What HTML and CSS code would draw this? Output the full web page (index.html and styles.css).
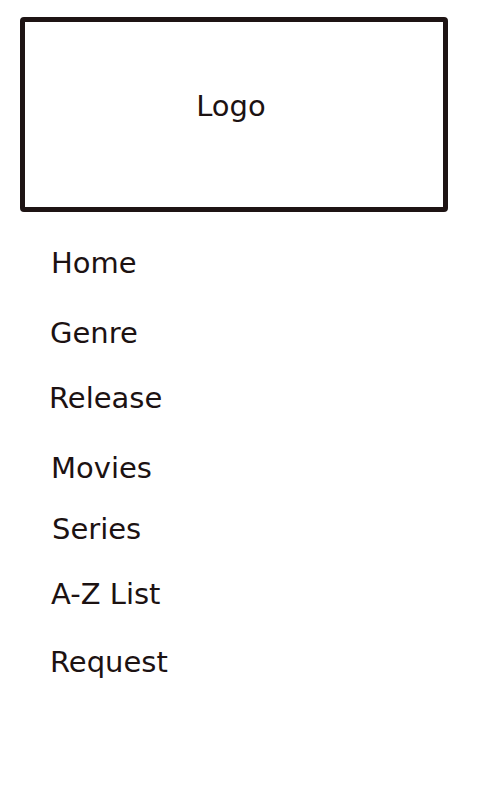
FILE: index.html
```html
<!DOCTYPE html>
<html lang="en">
<head>
<meta charset="utf-8">
<title>Menu</title>
<link rel="stylesheet" href="styles.css">
</head>
<body>
<div class="page">
  <div class="logo-box"><span class="logo-text">Logo</span></div>
  <nav class="menu">
    <a class="menu-item item-home" href="#">Home</a>
    <a class="menu-item item-genre" href="#">Genre</a>
    <a class="menu-item item-release" href="#">Release</a>
    <a class="menu-item item-movies" href="#">Movies</a>
    <a class="menu-item item-series" href="#">Series</a>
    <a class="menu-item item-az" href="#">A-Z List</a>
    <a class="menu-item item-request" href="#">Request</a>
  </nav>
</div>
</body>
</html>
```

FILE: styles.css
```css
html, body {
  margin: 0;
  padding: 0;
  background: #ffffff;
}

body {
  font-family: "DejaVu Sans", "Open Sans", "Liberation Sans", sans-serif;
  color: #1c1212;
  width: 480px;
  height: 803px;
  overflow: hidden;
}

.page {
  padding: 17px 0 0 20px;
}

.logo-box {
  box-sizing: border-box;
  width: 428px;
  height: 195px;
  border: 5px solid #1e1414;
  border-radius: 4px;
  display: flex;
  align-items: center;
  justify-content: center;
}

.logo-text {
  font-size: 29px;
  line-height: 1;
  margin-top: -17px;
  margin-left: -6px;
}

.menu {
  display: flex;
  flex-direction: column;
  align-items: flex-start;
  padding-top: 31px;
}

.menu-item {
  color: #1c1212;
  text-decoration: none;
  font-size: 29px;
  line-height: 40px;
  margin-left: 31px;
}

.item-genre { margin-top: 30px; margin-left: 30px; }
.item-release { margin-top: 25px; margin-left: 29px; }
.item-movies { margin-top: 30px; margin-left: 31px; }
.item-series { margin-top: 21px; margin-left: 32px; }
.item-az { margin-top: 25px; margin-left: 31px; }
.item-request { margin-top: 28px; margin-left: 30px; }
```
